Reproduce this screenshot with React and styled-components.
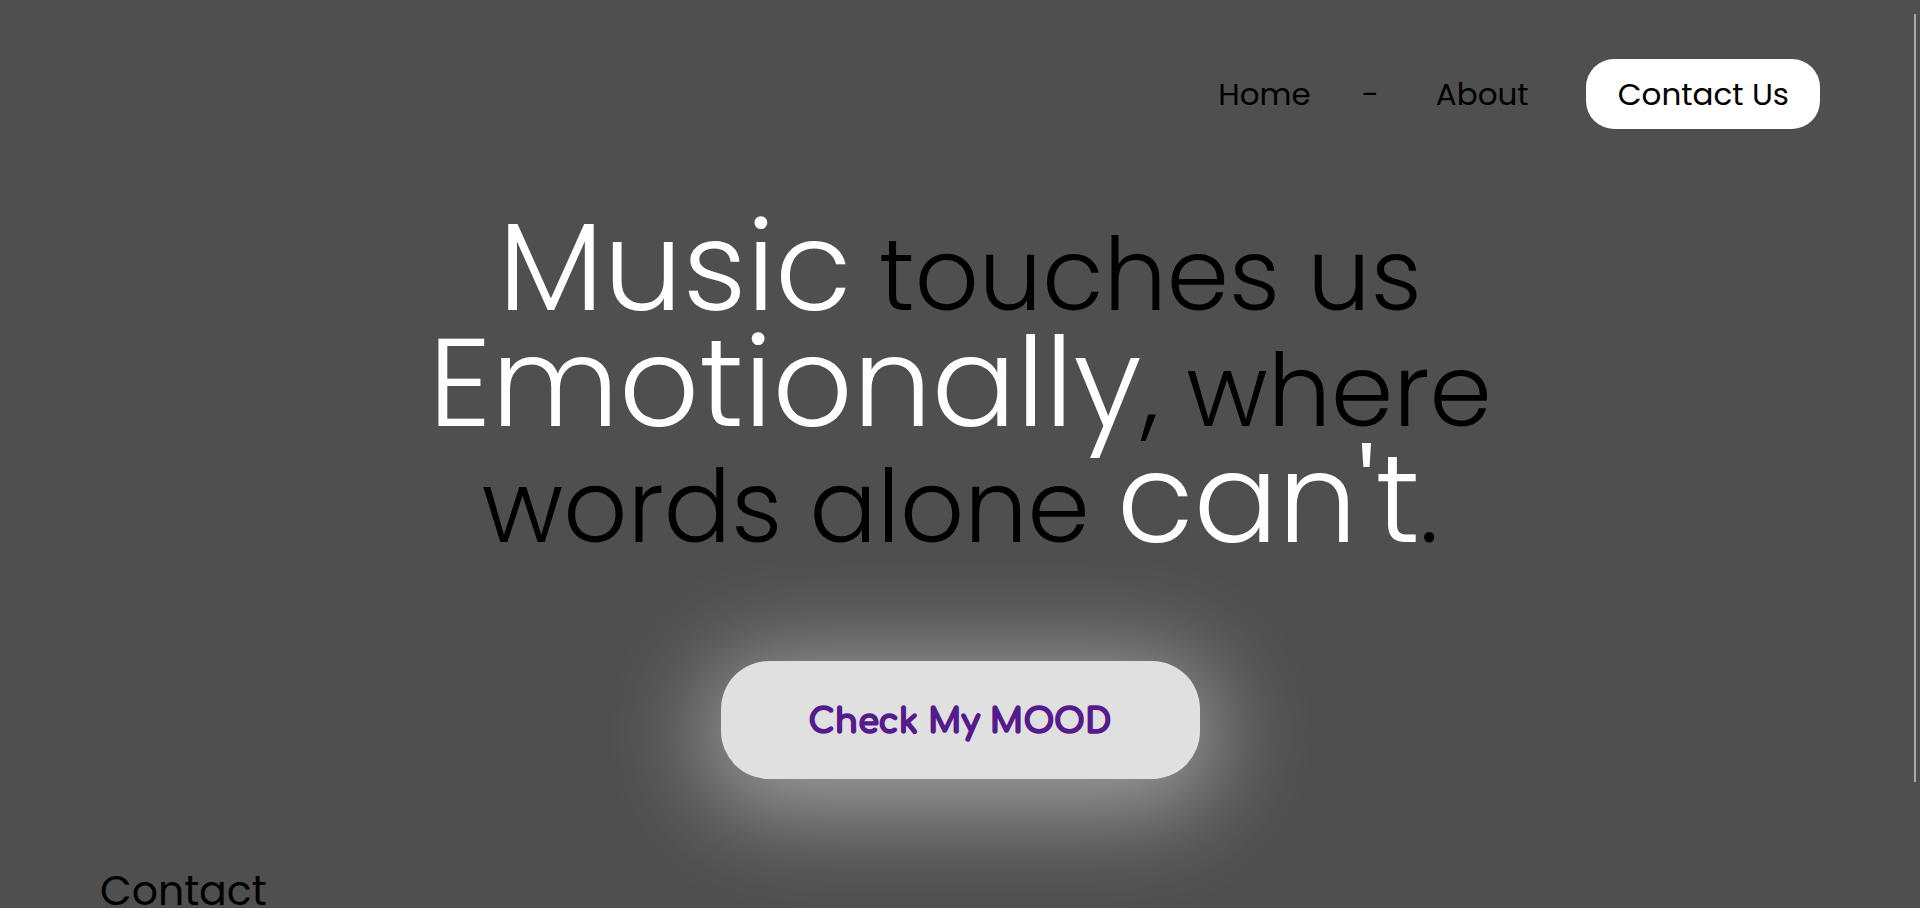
import styled, { createGlobalStyle } from "styled-components";

const GlobalStyle = createGlobalStyle`
  html, body {
    margin: 0;
    padding: 0;
    background: #4f4f4f;
  }

  body {
    font-family: "Poppins", "Open Sans", sans-serif;
    color: #000000;
  }
`;

const Page = styled.div`
  min-height: 100vh;
  display: flex;
  flex-direction: column;
`;

// thin scroll indicator on the right edge
const ScrollThumb = styled.div`
  position: fixed;
  top: 14px;
  right: 4px;
  width: 2px;
  height: 768px;
  background: #a8a8a8;
`;

const Header = styled.header`
  display: flex;
  justify-content: flex-end;
  padding: 59px 100px 0 0;
`;

const Nav = styled.nav`
  display: flex;
  align-items: center;
  gap: 57px;
`;

const NavLink = styled.a`
  font-size: 31px;
  font-weight: 400;
  color: #000000;
  text-decoration: none;
  cursor: pointer;
`;

const Separator = styled.span`
  margin-left: -6px;
  font-size: 31px;
  color: #000000;
`;

const ContactButton = styled.button`
  height: 70px;
  padding: 0 31px 0 32px;
  border: none;
  border-radius: 28px;
  background: #ffffff;
  font-family: inherit;
  font-size: 31px;
  color: #000000;
  cursor: pointer;
`;

const Hero = styled.section`
  display: flex;
  flex-direction: column;
  align-items: center;
  margin-top: 88px;
`;

const Headline = styled.h1`
  margin: 0;
  font-size: 100px;
  font-weight: 300;
  line-height: 116px;
  text-align: center;
  color: #000000;
`;

const Line = styled.span`
  display: block;
  height: 116px;
  white-space: nowrap;
`;

const Bright = styled.span`
  color: #ffffff;
  font-size: 125px;
  line-height: 0;
`;

const MoodButton = styled.a`
  display: flex;
  align-items: center;
  justify-content: center;
  width: 479px;
  height: 118px;
  margin-top: 96px;
  padding-top: 4px;
  box-sizing: border-box;
  border-radius: 48px;
  background: #e0e0e0;
  box-shadow: 0 14px 100px 16px rgba(255, 255, 255, 0.48);
  font-family: "Comfortaa", "Lato", sans-serif;
  font-size: 34px;
  font-weight: 700;
  color: #551a8b;
  -webkit-text-stroke: 1.6px #551a8b;
  text-decoration: none;
  cursor: pointer;
`;

const ContactSection = styled.section`
  padding: 81px 100px 120px;
`;

const ContactTitle = styled.h2`
  margin: 0;
  font-size: 41px;
  font-weight: 400;
  color: #000000;
`;

const ContactText = styled.p`
  margin: 16px 0 0;
  font-size: 20px;
  color: #000000;
`;

export default function App() {
  return (
    <Page>
      <GlobalStyle />
      <ScrollThumb />
      <Header>
        <Nav>
          <NavLink>Home</NavLink>
          <Separator>-</Separator>
          <NavLink>About</NavLink>
          <ContactButton>Contact Us</ContactButton>
        </Nav>
      </Header>

      <Hero>
        <Headline>
          <Line>
            <Bright>Music</Bright> touches us
          </Line>
          <Line>
            <Bright>Emotionally</Bright>, where
          </Line>
          <Line>
            words alone <Bright>can't</Bright>.
          </Line>
        </Headline>
        <MoodButton href="#">Check My MOOD</MoodButton>
      </Hero>

      <ContactSection>
        <ContactTitle>Contact</ContactTitle>
        <ContactText>Reach out and tell us how you feel.</ContactText>
      </ContactSection>
    </Page>
  );
}
